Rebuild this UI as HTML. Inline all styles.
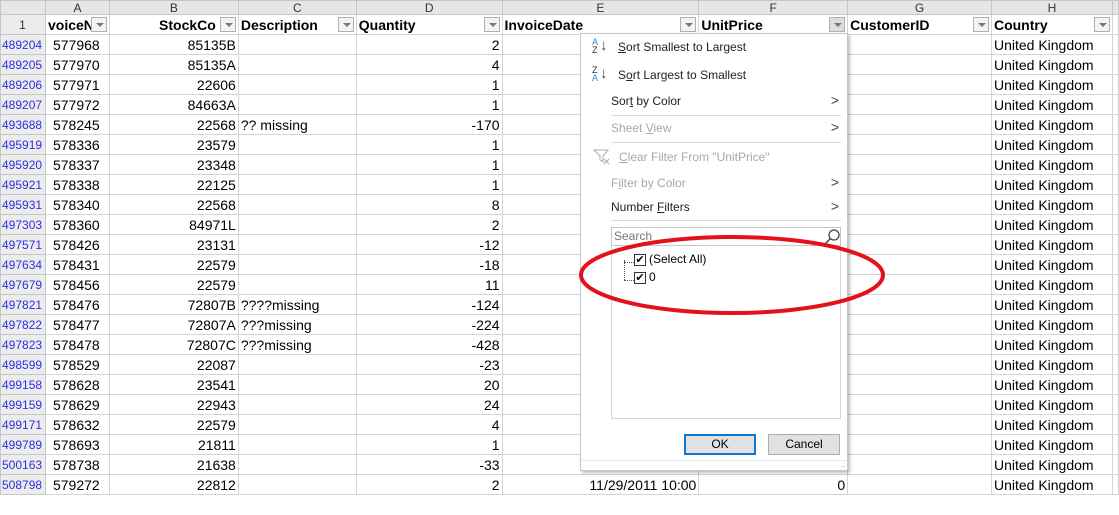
<!DOCTYPE html>
<html><head><style>
*{margin:0;padding:0;box-sizing:border-box}
body{width:1119px;height:515px;background:#fff;overflow:hidden;position:relative;font-family:"Liberation Sans",sans-serif;font-size:14px;color:#000}
table{position:absolute;left:0;top:0;border-collapse:collapse;table-layout:fixed}
td{height:20px;border:1px solid #d4d4d4;white-space:nowrap;overflow:hidden;padding:0 2px;line-height:18px}
tr.ch td{height:14px;line-height:12px;background:#e6e6e6;border-color:#c6c6c6;text-align:center;font-size:12px;color:#333}
td.rh{background:#ececec;border-color:#c6c6c6;color:#2e2ee0;font-size:12px;text-align:left;padding-left:1px}
td.a{padding-left:7px}
tr.hd td{font-weight:bold;position:relative}
.r{text-align:right}
.dd{position:absolute;right:2px;top:2px;width:16px;height:15px;border:1px solid #b0b0b0;background:#f3f3f3}
.dd:after{content:"";position:absolute;left:4px;top:5px;border-left:4px solid transparent;border-right:4px solid transparent;border-top:4px solid #777}
.menu{position:absolute;left:580px;top:33px;width:268px;height:438px;background:#fff;border:1px solid #c6c6c6;box-shadow:2px 2px 3px rgba(0,0,0,.25);font-size:12px}
.mi{position:absolute;left:30px;color:#222}
.g{color:#a8a8a8}
.arr{position:absolute;right:8px;font-size:14px;color:#444}
.sep{position:absolute;left:30px;right:6px;height:1px;background:#dadada}
.btn{position:absolute;top:400px;width:72px;height:21px;background:#e1e1e1;border:1px solid #adadad;text-align:center;line-height:19px;font-size:12px}
</style></head><body>
<table>
<colgroup><col style="width:45px"><col style="width:64px"><col style="width:129px"><col style="width:118px"><col style="width:146px"><col style="width:197px"><col style="width:149px"><col style="width:144px"><col style="width:121px"><col style="width:6px"></colgroup>
<tr class="ch"><td></td><td>A</td><td>B</td><td>C</td><td>D</td><td>E</td><td>F</td><td>G</td><td>H</td><td></td></tr>
<tr class="hd"><td class="rh" style="text-align:center;color:#333;font-weight:normal">1</td><td>voiceNo<span class="dd"></span></td><td class="r" style="padding-right:22px">StockCo<span class="dd"></span></td><td>Description<span class="dd"></span></td><td>Quantity<span class="dd"></span></td><td>InvoiceDate<span class="dd"></span></td><td>UnitPrice<span class="dd" style="background:#ddd"></span></td><td>CustomerID<span class="dd"></span></td><td>Country<span class="dd"></span></td><td></td></tr>
<tr><td class="rh">489204</td><td class="a">577968</td><td class="r">85135B</td><td></td><td class="r">2</td><td></td><td></td><td></td><td>United Kingdom</td><td></td></tr>
<tr><td class="rh">489205</td><td class="a">577970</td><td class="r">85135A</td><td></td><td class="r">4</td><td></td><td></td><td></td><td>United Kingdom</td><td></td></tr>
<tr><td class="rh">489206</td><td class="a">577971</td><td class="r">22606</td><td></td><td class="r">1</td><td></td><td></td><td></td><td>United Kingdom</td><td></td></tr>
<tr><td class="rh">489207</td><td class="a">577972</td><td class="r">84663A</td><td></td><td class="r">1</td><td></td><td></td><td></td><td>United Kingdom</td><td></td></tr>
<tr><td class="rh">493688</td><td class="a">578245</td><td class="r">22568</td><td>?? missing</td><td class="r">-170</td><td></td><td></td><td></td><td>United Kingdom</td><td></td></tr>
<tr><td class="rh">495919</td><td class="a">578336</td><td class="r">23579</td><td></td><td class="r">1</td><td></td><td></td><td></td><td>United Kingdom</td><td></td></tr>
<tr><td class="rh">495920</td><td class="a">578337</td><td class="r">23348</td><td></td><td class="r">1</td><td></td><td></td><td></td><td>United Kingdom</td><td></td></tr>
<tr><td class="rh">495921</td><td class="a">578338</td><td class="r">22125</td><td></td><td class="r">1</td><td></td><td></td><td></td><td>United Kingdom</td><td></td></tr>
<tr><td class="rh">495931</td><td class="a">578340</td><td class="r">22568</td><td></td><td class="r">8</td><td></td><td></td><td></td><td>United Kingdom</td><td></td></tr>
<tr><td class="rh">497303</td><td class="a">578360</td><td class="r">84971L</td><td></td><td class="r">2</td><td></td><td></td><td></td><td>United Kingdom</td><td></td></tr>
<tr><td class="rh">497571</td><td class="a">578426</td><td class="r">23131</td><td></td><td class="r">-12</td><td></td><td></td><td></td><td>United Kingdom</td><td></td></tr>
<tr><td class="rh">497634</td><td class="a">578431</td><td class="r">22579</td><td></td><td class="r">-18</td><td></td><td></td><td></td><td>United Kingdom</td><td></td></tr>
<tr><td class="rh">497679</td><td class="a">578456</td><td class="r">22579</td><td></td><td class="r">11</td><td></td><td></td><td></td><td>United Kingdom</td><td></td></tr>
<tr><td class="rh">497821</td><td class="a">578476</td><td class="r">72807B</td><td>????missing</td><td class="r">-124</td><td></td><td></td><td></td><td>United Kingdom</td><td></td></tr>
<tr><td class="rh">497822</td><td class="a">578477</td><td class="r">72807A</td><td>???missing</td><td class="r">-224</td><td></td><td></td><td></td><td>United Kingdom</td><td></td></tr>
<tr><td class="rh">497823</td><td class="a">578478</td><td class="r">72807C</td><td>???missing</td><td class="r">-428</td><td></td><td></td><td></td><td>United Kingdom</td><td></td></tr>
<tr><td class="rh">498599</td><td class="a">578529</td><td class="r">22087</td><td></td><td class="r">-23</td><td></td><td></td><td></td><td>United Kingdom</td><td></td></tr>
<tr><td class="rh">499158</td><td class="a">578628</td><td class="r">23541</td><td></td><td class="r">20</td><td></td><td></td><td></td><td>United Kingdom</td><td></td></tr>
<tr><td class="rh">499159</td><td class="a">578629</td><td class="r">22943</td><td></td><td class="r">24</td><td></td><td></td><td></td><td>United Kingdom</td><td></td></tr>
<tr><td class="rh">499171</td><td class="a">578632</td><td class="r">22579</td><td></td><td class="r">4</td><td></td><td></td><td></td><td>United Kingdom</td><td></td></tr>
<tr><td class="rh">499789</td><td class="a">578693</td><td class="r">21811</td><td></td><td class="r">1</td><td></td><td></td><td></td><td>United Kingdom</td><td></td></tr>
<tr><td class="rh">500163</td><td class="a">578738</td><td class="r">21638</td><td></td><td class="r">-33</td><td></td><td></td><td></td><td>United Kingdom</td><td></td></tr>
<tr><td class="rh">508798</td><td class="a">579272</td><td class="r">22812</td><td></td><td class="r">2</td><td class="r">11/29/2011 10:00</td><td class="r">0</td><td></td><td>United Kingdom</td><td></td></tr>
</table>

<div class="menu">
  <div style="position:absolute;left:11px;top:4px;font-size:9px;line-height:8px;color:#2a8ad8">A<br><span style="color:#333">Z</span></div><div style="position:absolute;left:19px;top:3px;font-size:15px;color:#444">↓</div>
  <div class="mi" style="left:37px;top:6px"><u>S</u>ort Smallest to Largest</div>
  <div style="position:absolute;left:11px;top:32px;font-size:9px;line-height:8px;color:#333">Z<br><span style="color:#2a8ad8">A</span></div><div style="position:absolute;left:19px;top:31px;font-size:15px;color:#444">↓</div>
  <div class="mi" style="left:37px;top:34px">S<u>o</u>rt Largest to Smallest</div>
  <div class="mi" style="top:60px">Sor<u>t</u> by Color</div><div class="arr" style="top:58px">&gt;</div>
  <div class="sep" style="top:81px"></div>
  <div class="mi g" style="top:87px">Sheet <u>V</u>iew</div><div class="arr g" style="top:85px">&gt;</div>
  <div class="sep" style="top:108px"></div>
  <svg style="position:absolute;left:12px;top:114px" width="18" height="18"><path d="M1 2h14l-5 6v6l-3-2V8z" fill="none" stroke="#aaa"/><path d="M11 11l5 5M16 11l-5 5" stroke="#aaa"/></svg>
  <div class="mi g" style="left:38px;top:116px"><u>C</u>lear Filter From "UnitPrice"</div>
  <div class="mi g" style="top:142px">F<u>i</u>lter by Color</div><div class="arr g" style="top:140px">&gt;</div>
  <div class="mi" style="top:166px">Number <u>F</u>ilters</div><div class="arr" style="top:164px">&gt;</div>
  <div class="sep" style="top:186px"></div>
  <div style="position:absolute;left:30px;top:193px;width:230px;height:19px;border:1px solid #c6c6c6;color:#777;padding-left:2px;line-height:17px">Search
    <svg style="position:absolute;right:0;top:1px" width="16" height="16"><circle cx="10" cy="6" r="5" fill="none" stroke="#444" stroke-width="1.3"/><path d="M6.5 9.5L1 15" stroke="#444" stroke-width="1.5"/></svg></div>
  <div style="position:absolute;left:30px;top:212px;width:230px;height:173px;border:1px solid #d6d6d6;border-top:none">
    <div style="position:absolute;left:12px;top:14px;width:1px;height:20px;border-left:1px dotted #555"></div>
    <div style="position:absolute;left:12px;top:34px;width:10px;border-top:1px dotted #555"></div>
    <div style="position:absolute;left:12px;top:16px;width:10px;border-top:1px dotted #555"></div>
    <div style="position:absolute;left:22px;top:8px;width:12px;height:12px;border:1px solid #333;font-size:11px;line-height:10px;text-align:center">✔</div>
    <div style="position:absolute;left:37px;top:6px">(Select All)</div>
    <div style="position:absolute;left:22px;top:26px;width:12px;height:12px;border:1px solid #333;font-size:11px;line-height:10px;text-align:center">✔</div>
    <div style="position:absolute;left:37px;top:24px">0</div>
  </div>
  <div class="btn" style="left:103px;border:2px solid #0a78d7;line-height:17px">OK</div>
  <div class="btn" style="left:187px">Cancel</div>
  <div style="position:absolute;left:0;right:0;top:426px;height:1px;background:#e6e6e6"></div>
  <div style="position:absolute;right:2px;bottom:2px;font-size:7px;color:#999;line-height:4px">.:<br></div>
</div>
<svg style="position:absolute;left:0;top:0" width="1119" height="515"><ellipse cx="732" cy="275" rx="151" ry="38" fill="none" stroke="#e3111b" stroke-width="4"/></svg>
</body></html>
